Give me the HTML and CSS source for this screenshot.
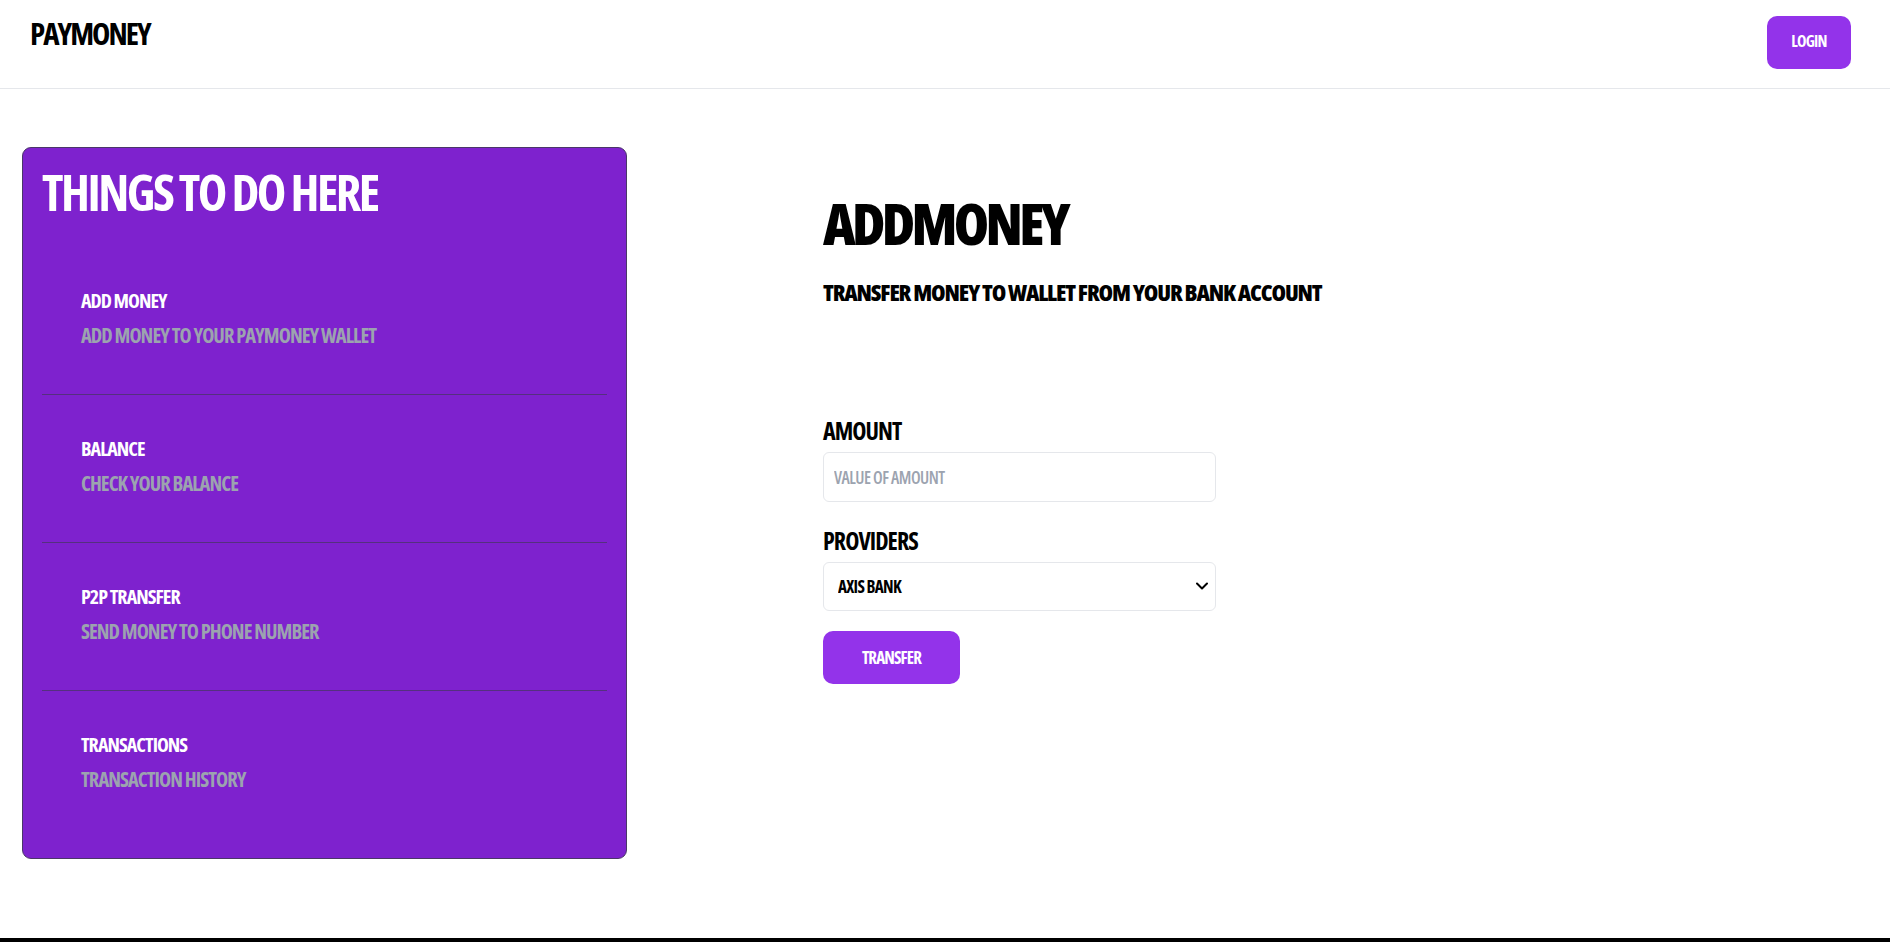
FILE: index.html
```html
<!DOCTYPE html>
<html lang="en">
<head>
<meta charset="utf-8">
<title>PayMoney</title>
<link rel="stylesheet" href="styles.css">
</head>
<body>
<header class="topbar">
  <div class="logo">PAYMONEY</div>
  <button class="btn login-btn">LOGIN</button>
</header>

<main class="page">
  <aside class="card">
    <h2 class="card-title">THINGS TO DO HERE</h2>
    <ul class="menu">
      <li class="menu-item">
        <div class="menu-title">ADD MONEY</div>
        <div class="menu-desc">ADD MONEY TO YOUR PAYMONEY WALLET</div>
      </li>
      <li class="menu-item">
        <div class="menu-title">BALANCE</div>
        <div class="menu-desc">CHECK YOUR BALANCE</div>
      </li>
      <li class="menu-item">
        <div class="menu-title">P2P TRANSFER</div>
        <div class="menu-desc">SEND MONEY TO PHONE NUMBER</div>
      </li>
      <li class="menu-item">
        <div class="menu-title">TRANSACTIONS</div>
        <div class="menu-desc">TRANSACTION HISTORY</div>
      </li>
    </ul>
  </aside>

  <section class="content">
    <h1 class="heading">ADDMONEY</h1>
    <p class="subheading">TRANSFER MONEY TO WALLET FROM YOUR BANK ACCOUNT</p>

    <form class="form">
      <label class="field-label" for="amount">AMOUNT</label>
      <input class="field-input" id="amount" type="text" placeholder="VALUE OF AMOUNT">

      <label class="field-label providers-label" for="provider">PROVIDERS</label>
      <div class="select-wrap">
        <select class="field-select" id="provider">
          <option>AXIS BANK</option>
          <option>HDFC BANK</option>
        </select>
        <svg class="chevron" width="12" height="9" viewBox="0 0 12 9" aria-hidden="true">
          <path d="M1 1.5 L6 6.5 L11 1.5" fill="none" stroke="#000" stroke-width="2" stroke-linecap="round" stroke-linejoin="round"/>
        </svg>
      </div>

      <button type="button" class="btn transfer-btn">TRANSFER</button>
    </form>
  </section>
</main>

<footer class="footer"></footer>
</body>
</html>
```
FILE: styles.css
```css
* {
  box-sizing: border-box;
}

html, body {
  margin: 0;
  padding: 0;
}

body {
  font-family: "Open Sans", "Roboto", "Liberation Sans", sans-serif;
  font-stretch: 75%;
  font-weight: 700;
  letter-spacing: -0.06em;
  text-transform: uppercase;
  color: #000;
  background: #fff;
}

/* ---------- Header ---------- */
.topbar {
  height: 89px;
  display: flex;
  justify-content: space-between;
  align-items: flex-start;
  padding: 16px 39px 0 30px;
  border-bottom: 1px solid #e5e7eb;
}

.logo {
  font-size: 31px;
  line-height: 34px;
  font-weight: 700;
  letter-spacing: -0.065em;
}

.btn {
  font-family: inherit;
  font-stretch: 75%;
  font-weight: 700;
  letter-spacing: -0.05em;
  color: #fff;
  background: #9333ea;
  border: none;
  border-radius: 10px;
  cursor: pointer;
  padding: 0;
}

.login-btn {
  width: 84px;
  height: 53px;
  font-size: 16px;
  line-height: 20px;
  padding-bottom: 3px;
}

/* ---------- Main ---------- */
.page {
  display: flex;
  align-items: flex-start;
  min-height: 849px;
  padding: 58px 22px 79px;
}

.card {
  width: 605px;
  flex: none;
  background: #7e22ce;
  border: 1px solid #4a3768;
  border-radius: 9px;
  padding: 18px 19px 20px;
}

.card-title {
  margin: 0 0 29px;
  font-size: 50px;
  line-height: 52px;
  font-weight: 700;
  letter-spacing: -0.05em;
  color: #fff;
}

.menu {
  list-style: none;
  margin: 0;
  padding: 0;
}

.menu-item {
  padding: 37px 39px 42px;
  border-bottom: 1px solid #55307f;
}

.menu-item:last-child {
  border-bottom: none;
}

.menu-title,
.menu-desc {
  line-height: 34px;
  font-weight: 700;
}

.menu-title {
  font-size: 20px;
  color: #fff;
}

.menu-desc {
  font-size: 20.5px;
  color: #9ca3af;
}

/* ---------- Content ---------- */
.content {
  margin-left: 196px;
  display: flex;
  flex-direction: column;
}

.heading {
  margin: 45px 0 0;
  font-size: 57px;
  line-height: 62px;
  font-weight: 800;
  letter-spacing: -0.065em;
}

.subheading {
  margin: 23px 0 0;
  font-size: 23.5px;
  line-height: 30px;
  font-weight: 800;
  letter-spacing: -0.05em;
}

.form {
  margin-top: 109px;
  display: flex;
  flex-direction: column;
  align-items: flex-start;
}

.field-label {
  font-size: 24px;
  line-height: 30px;
  font-weight: 700;
  margin-bottom: 6px;
}

.providers-label {
  margin-top: 24px;
}

.field-input {
  width: 393px;
  height: 50px;
  border: 1px solid #e5e7eb;
  border-radius: 6px;
  padding: 0 10px;
  font-family: inherit;
  font-stretch: 75%;
  font-weight: 600;
  font-size: 17px;
  letter-spacing: -0.03em;
  color: #000;
  outline: none;
}

.field-input::placeholder {
  color: #9ca3af;
}

.select-wrap {
  position: relative;
  width: 393px;
  height: 49px;
}

.field-select {
  appearance: none;
  -webkit-appearance: none;
  width: 100%;
  height: 100%;
  border: 1px solid #e5e7eb;
  border-radius: 6px;
  background: #fff;
  padding: 0 14px;
  font-family: inherit;
  font-stretch: 75%;
  font-weight: 700;
  font-size: 17px;
  letter-spacing: -0.04em;
  color: #000;
  outline: none;
}

.chevron {
  position: absolute;
  right: 8px;
  top: 20px;
  pointer-events: none;
}

.transfer-btn {
  margin-top: 20px;
  width: 137px;
  height: 53px;
  font-size: 17px;
  line-height: 20px;
}

/* ---------- Footer ---------- */
.footer {
  height: 40px;
  background: #000;
}
```
